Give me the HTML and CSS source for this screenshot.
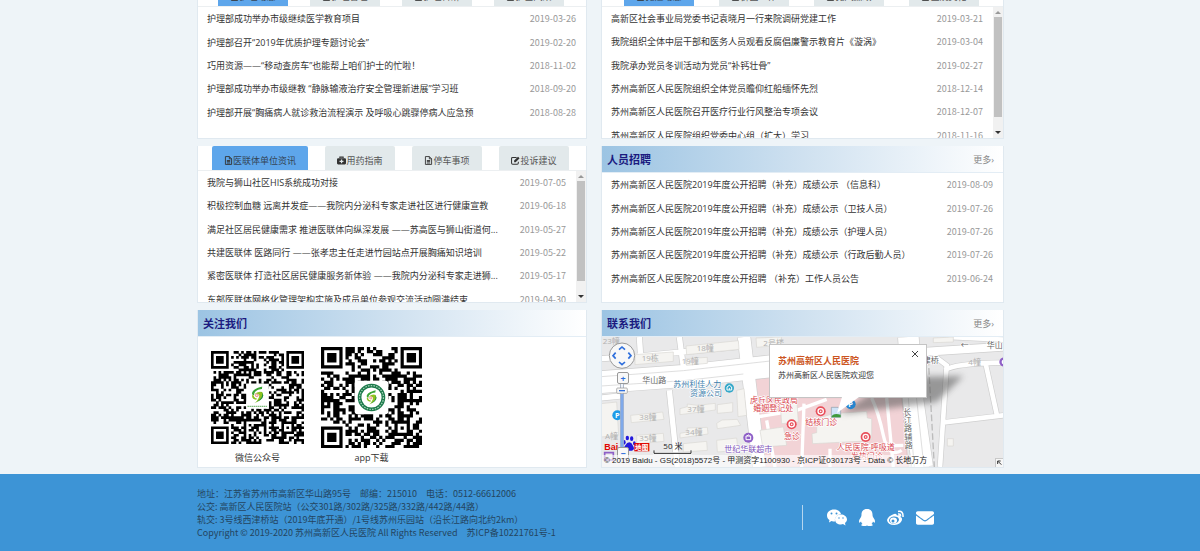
FILE: index.html
```html
<!DOCTYPE html>
<html lang="zh-CN">

<head>
    <meta charset="UTF-8" />
    <meta name="viewport" content="width=device-width, initial-scale=1.0" />
    <title>苏州高新区人民医院</title>
    <link rel="stylesheet" href="styles.css">
</head>

<body>
    <!-- shared icons -->
    <svg class="sprite" aria-hidden="true">
        <symbol id="icon-file" viewBox="0 0 14 16">
            <path d="M1.5 1h7l4 4v10h-11zM8.5 1v4h4M4 8h6M4 10h6M4 12.500h6" fill="none" stroke="currentColor" stroke-width="1.6" />
        </symbol>
        <symbol id="icon-medkit" viewBox="0 0 16 16">
            <path d="M5 4V2h6v2" fill="none" stroke="currentColor" stroke-width="1.8" />
            <path fill-rule="evenodd" d="M2 4h12q2 0 2 2v7q0 2-2 2H2q-2 0-2-2V6q0-2 2-2zM7 6v2.500H4.500v2.200H7V13h2.200v-2.300h2.300V8.500H9.200V6z" fill="currentColor" />
        </symbol>
        <symbol id="icon-edit" viewBox="0 0 16 16">
            <path d="M10 2.500H3Q1 2.500 1 4.500v8Q1 14.500 3 14.500h8q2 0 2-2V10" fill="none" stroke="currentColor" stroke-width="1.8" />
            <path d="M5.500 11V8.200L12.500 1.200l2.800 2.800L8.300 11z" fill="currentColor" />
        </symbol>
        <symbol id="hospital-mark" viewBox="0 0 40 48">
            <path d="M33 1C16 5 5 12 5 20q0 5 6 4C9 16 20 9 32 8z" fill="#3aa535" />
            <path d="M11 22q11-10 22-6 6 12-8 23l-12 7q12-12 12-22-7-5-14-2z" fill="#8fc31f" />
            <path d="M31 15q6 13-7 23-5 5-12 8Q35 38 36 25z" fill="#22913a" />
            <path d="M5 25q0 12 11 12l3-3Q10 33 9 24z" fill="#8fc31f" />
            <circle cx="18" cy="25" r="5" fill="#ef9a91" />
            <circle cx="18" cy="25" r="2" fill="#fff" />
        </symbol>
    </svg>

    <main class="page">
        <section class="card">
            <nav class="tabs tabs-nursing">
                <button class="tab active"><svg class="icon"><use href="#icon-file" /></svg>护理动态</button>
                <button class="tab"><svg class="icon"><use href="#icon-file" /></svg>护理管理</button>
                <button class="tab"><svg class="icon"><use href="#icon-file" /></svg>护理科研</button>
                <button class="tab"><svg class="icon"><use href="#icon-file" /></svg>护士风采</button>
            </nav>
            <ul class="news">
                <li><a href="#">护理部成功举办市级继续医学教育项目</a><time>2019-03-26</time></li>
                <li><a href="#">护理部召开“2019年优质护理专题讨论会”</a><time>2019-02-20</time></li>
                <li><a href="#">巧用资源——“移动查房车”也能帮上咱们护士的忙啦！</a><time>2018-11-02</time></li>
                <li><a href="#">护理部成功举办市级继教 “静脉输液治疗安全管理新进展”学习班</a><time>2018-09-20</time></li>
                <li><a href="#">护理部开展“胸痛病人就诊救治流程演示 及呼吸心跳骤停病人应急预</a><time>2018-08-28</time></li>
            </ul>
        </section>

        <section class="card">
            <nav class="tabs tabs-party">
                <button class="tab active"><svg class="icon"><use href="#icon-file" /></svg>党建动态</button>
                <button class="tab"><svg class="icon"><use href="#icon-file" /></svg>群团工作</button>
                <button class="tab"><svg class="icon"><use href="#icon-file" /></svg>党风廉政</button>
                <button class="tab"><svg class="icon"><use href="#icon-file" /></svg>医院文化</button>
            </nav>
            <div class="scroll-box">
                <ul class="news news-long">
                    <li><a href="#">高新区社会事业局党委书记袁晓月一行来院调研党建工作</a><time>2019-03-21</time></li>
                    <li><a href="#">我院组织全体中层干部和医务人员观看反腐倡廉警示教育片《漩涡》</a><time>2019-03-04</time></li>
                    <li><a href="#">我院承办党员冬训活动为党员“补钙壮骨”</a><time>2019-02-27</time></li>
                    <li><a href="#">苏州高新区人民医院组织全体党员瞻仰红船缅怀先烈</a><time>2018-12-14</time></li>
                    <li><a href="#">苏州高新区人民医院召开医疗行业行风整治专项会议</a><time>2018-12-07</time></li>
                    <li><a href="#">苏州高新区人民医院组织党委中心组（扩大）学习</a><time>2018-11-16</time></li>
                </ul>
                <div class="scrollbar"><span class="up"></span><span class="thumb"></span><span class="down"></span></div>
            </div>
        </section>

        <section class="card">
            <nav class="tabs tabs-union">
                <button class="tab active wide"><svg class="icon"><use href="#icon-file" /></svg>医联体单位资讯</button>
                <button class="tab"><svg class="icon"><use href="#icon-medkit" /></svg>用药指南</button>
                <button class="tab"><svg class="icon"><use href="#icon-file" /></svg>停车事项</button>
                <button class="tab"><svg class="icon"><use href="#icon-edit" /></svg>投诉建议</button>
            </nav>
            <div class="scroll-box">
                <ul class="news news-long">
                    <li><a href="#">我院与狮山社区HIS系统成功对接</a><time>2019-07-05</time></li>
                    <li><a href="#">积极控制血糖 远离并发症——我院内分泌科专家走进社区进行健康宣教</a><time>2019-06-18</time></li>
                    <li><a href="#">满足社区居民健康需求 推进医联体向纵深发展 ——苏高医与狮山街道何...</a><time>2019-05-27</time></li>
                    <li><a href="#">共建医联体 医路同行 ——张孝忠主任走进竹园站点开展胸痛知识培训</a><time>2019-05-22</time></li>
                    <li><a href="#">紧密医联体 打造社区居民健康服务新体验 ——我院内分泌科专家走进狮...</a><time>2019-05-17</time></li>
                    <li><a href="#">东部医联体网格化管理架构实施及成员单位参观交流活动圆满结束</a><time>2019-04-30</time></li>
                </ul>
                <div class="scrollbar"><span class="up"></span><span class="thumb"></span><span class="down"></span></div>
            </div>
        </section>

        <section class="card">
            <header class="card-head">
                <h2>人员招聘</h2>
                <a href="#">更多›</a>
            </header>
            <ul class="news">
                <li><a href="#">苏州高新区人民医院2019年度公开招聘（补充）成绩公示 （信息科）</a><time>2019-08-09</time></li>
                <li><a href="#">苏州高新区人民医院2019年度公开招聘（补充）成绩公示（卫技人员）</a><time>2019-07-26</time></li>
                <li><a href="#">苏州高新区人民医院2019年度公开招聘（补充）成绩公示（护理人员）</a><time>2019-07-26</time></li>
                <li><a href="#">苏州高新区人民医院2019年度公开招聘（补充）成绩公示（行政后勤人员）</a><time>2019-07-26</time></li>
                <li><a href="#">苏州高新区人民医院2019年度公开招聘 （补充）工作人员公告</a><time>2019-06-24</time></li>
            </ul>
        </section>

        <section class="card">
            <header class="card-head">
                <h2>关注我们</h2>
            </header>
            <div class="codes">
                <figure class="code">
                    <div class="code-box">
                        <svg class="qr qr-wechat" viewBox="0 0 37 37" data-size="37" data-seed="11">
                            <path class="modules" />
                            <rect x="14" y="13" width="9" height="10" fill="#fff" />
                            <use href="#hospital-mark" x="15" y="14" width="7" height="7" />
                            <path d="M14.500 22h8" stroke="#7dbb7a" stroke-width=".5" stroke-dasharray=".6 .2" />
                        </svg>
                    </div>
                    <figcaption>微信公众号</figcaption>
                </figure>
                <figure class="code">
                    <div class="code-box">
                        <svg class="qr qr-app" viewBox="0 0 33 33" data-size="33" data-seed="29">
                            <path class="modules" />
                            <rect x="11" y="11" width="11" height="11" rx="1" fill="#fff" />
                            <circle cx="16.500" cy="16.500" r="3.900" fill="none" stroke="#1c7a4b" stroke-width="1.200" />
                            <circle cx="16.500" cy="16.500" r="3.900" fill="none" stroke="#a9d3bc" stroke-width=".4" stroke-dasharray=".5 .4" />
                            <use href="#hospital-mark" x="14" y="14" width="5" height="5" />
                        </svg>
                    </div>
                    <figcaption>app下载</figcaption>
                </figure>
            </div>
        </section>

        <section class="card">
            <header class="card-head">
                <h2>联系我们</h2>
                <a href="#">更多›</a>
            </header>
            <div class="map">
                <svg class="map-canvas" viewBox="3 5 1209 390" preserveAspectRatio="xMidYMid slice">
                    <defs>
                        <filter id="soften" x="-20%" y="-20%" width="140%" height="140%"><feGaussianBlur stdDeviation="9" /></filter>
                        <g id="clinic">
                            <circle r="15" fill="#e8505b" />
                            <circle r="8" fill="none" stroke="#fff" stroke-width="4" />
                            <circle r="2.500" fill="#fff" />
                        </g>
                    </defs>
                    <rect x="3" y="5" width="1209" height="390" fill="#e9e9ea" />
                    <path d="M455 133L520 125V187H905L925 395H490z" fill="#f2d3d6" stroke="#d9b9bc" stroke-width="2" />

                    <!-- roads: grey casing first, white on top -->
                    <g fill="none" stroke="#cfcfcf">
                        <path stroke-width="20" d="M3 70L120 62 435 32M238 5L252 110M118 5L122 62M208 165L232 395M3 188L60 182M525 5L540 80" />
                        <path stroke-width="70" d="M3 140L250 122 520 92" />
                        <path stroke-width="42" d="M432 5L448 140 478 395" />
                        <path stroke-width="66" d="M925 5L940 200 968 395" />
                        <path stroke-width="28" d="M965 50L1212 34" />
                        <path stroke-width="18" d="M1045 5L1212 13M1000 60L1040 90 1020 395M1035 105Q1060 84 1212 82M1158 90L1192 245M1025 262L1212 240" />
                    </g>
                    <g fill="none" stroke="#fff">
                        <path stroke-width="16" d="M3 70L120 62 435 32M238 5L252 110M118 5L122 62M208 165L232 395M3 188L60 182M525 5L540 80" />
                        <path stroke-width="66" d="M3 140L250 122 520 92" />
                        <path stroke-width="38" d="M432 5L448 140 478 395" />
                        <path stroke-width="62" d="M925 5L940 200 968 395" />
                        <path stroke-width="24" d="M965 50L1212 34" />
                        <path stroke-width="14" d="M1045 5L1212 13M1000 60L1040 90 1020 395M1035 105Q1060 84 1212 82M1158 90L1192 245M1025 262L1212 240" />
                        <path stroke-width="10" d="M470 245L590 225 680 192M612 205L605 395M500 255L525 395M815 188Q835 230 850 300T905 345M860 188L880 395M690 340L690 395M720 335L910 330" />
                    </g>
                    <g fill="none" stroke="#cfcfcf" stroke-width="2">
                        <path d="M3 124L250 106 520 76M3 152L250 136 430 116M918 110L943 395M940 100L972 395" />
                        <path d="M985 70L1003 395" stroke="#bcbcbc" stroke-width="4" stroke-dasharray="20 8" />
                    </g>

                    <!-- buildings -->
                    <g fill="#f5f4f1" stroke="#dad8d3" stroke-width="2">
                        <path d="M258 32L415 16 417 42 260 58zM105 58L220 50 220 78 105 88zM258 70L322 66V84L260 90z" />
                        <path d="M92 240L188 230 192 252 94 262zM240 220L262 214 262 206 292 210 346 204 346 224 240 238zM352 208L398 202 398 230 352 234z" />
                        <path d="M240 294L262 290 262 278 322 276 324 296 240 308zM350 264L366 254 412 252 422 270 352 280zM110 300L190 294 192 318 110 326zM3 205L50 200 56 300 3 305z" />
                        <path d="M250 325L320 318 322 345 250 350zM350 315L410 308 414 345 352 350zM468 8L545 5 540 30 470 36zM410 165L432 160 440 240 414 244z" />
                        <path d="M540 195L590 190 595 260 545 265zM480 285L550 275 560 330 488 335z" />
                        <path d="M650 250L700 235 800 228 802 248 815 250 815 312 780 318 638 325 636 295 650 292z" />
                        <path d="M1042 310h18v22h-18zM1000 8L1060 5 1060 20 1000 22z" />
                    </g>

                    <path d="M880 125L1090 122 1010 200Q900 215 720 236z" fill="#555" opacity=".55" filter="url(#soften)" />

                    <g class="map-label grey">
                        <text x="8" y="26">23幢</text>
                        <text x="290" y="48">18幢</text>
                        <text x="125" y="77">19栋</text>
                        <text x="245" y="86">19幢</text>
                        <text x="490" y="32">2号楼</text>
                        <text x="262" y="231">37幢</text>
                        <text x="118" y="255">38幢</text>
                        <text x="256" y="300">34幢</text>
                        <text x="118" y="316">35幢</text>
                        <text x="15" y="312">A幢</text>
                        <text x="1105" y="88">4幢</text>
                    </g>
                    <g class="map-label dark">
                        <text x="127" y="142">华山路</text>
                        <text x="1160" y="38">华山</text>
                        <text x="968" y="84">津桥</text>
                        <text x="910" y="238">长</text>
                        <text x="911" y="263">江</text>
                        <text x="912" y="288">路</text>
                        <text x="913" y="313">辅</text>
                        <text x="914" y="338">路</text>
                        <text x="1082" y="38">←</text>
                    </g>
                    <g class="map-label blue">
                        <text x="220" y="155">苏州利佳人力</text>
                        <text x="270" y="182">资源公司</text>
                    </g>
                    <g class="map-label red">
                        <text x="450" y="202">虎丘区民政局</text>
                        <text x="460" y="228">婚姻登记处</text>
                        <text x="552" y="310">急诊</text>
                        <text x="616" y="270">结核门诊</text>
                        <text x="710" y="345">人民医院·呼吸道</text>
                        <text x="752" y="371">发热门诊</text>
                    </g>
                    <g class="map-label violet">
                        <text x="373" y="350">世纪华联超市</text>
                    </g>

                    <use href="#clinic" x="575" y="267" />
                    <use href="#clinic" x="662" y="228" />
                    <use href="#clinic" x="797" y="305" />
                    <circle cx="388" cy="158" r="14" fill="#35a8c9" />
                    <path d="M381 164v-9l7-5 7 5v9zM388 164v-6" fill="none" stroke="#fff" stroke-width="3" />
                    <circle cx="445" cy="307" r="15" fill="#8e5fc7" />
                    <path d="M438 302h14v11h-14zM441 302q4-7 8 0" fill="none" stroke="#fff" stroke-width="3" />
                    <circle cx="1212" cy="80" r="14" fill="#8e5fc7" />
                    <circle cx="1212" cy="80" r="7" fill="#fff" />
                    <circle cx="52" cy="240" r="15" fill="#1e9be8" />
                    <text class="parking" x="45" y="248">P</text>
                    <circle cx="752" cy="207" r="15" fill="#2585cf" />
                    <text class="parking" x="745" y="215">P</text>
                    <path d="M14 352h26v22H14z" fill="none" stroke="#8e5fc7" stroke-width="5" />

                    <!-- missing marker picture -->
                    <path d="M694 216h20l8 8v22h-28z" fill="#cfe3f7" stroke="#8c9aa6" stroke-width="2" />
                    <path d="M694 246q4-14 28-8v8z" fill="#3e9a3c" />

                    <!-- Baidu logo -->
                    <text class="logo-red" x="13" y="345">Bai</text>
                    <g fill="#2319dc">
                        <ellipse cx="72" cy="321" rx="5" ry="7" />
                        <ellipse cx="82" cy="308" rx="5" ry="7" />
                        <ellipse cx="95" cy="310" rx="5" ry="7" />
                        <ellipse cx="103" cy="324" rx="4" ry="6" />
                        <path d="M88 321q7 0 10 9 9 13-2 16H78q-12-3-3-15 6-10 13-10z" />
                    </g>
                    <rect x="103" y="323" width="45" height="25" fill="#e10601" />
                    <text class="logo-white" x="105" y="344">地图</text>

                    <!-- scale -->
                    <path d="M162 345v9h111v-9" fill="none" stroke="#fff" stroke-width="7" />
                    <path d="M162 345v9h111v-9" fill="none" stroke="#222" stroke-width="3" />
                    <text class="scale" x="190" y="341">50 米</text>

                    <!-- pan wheel and zoom track -->
                    <circle cx="66" cy="61" r="38" fill="#f8f8f8" stroke="#9a9a9a" stroke-width="3" />
                    <path d="M57 43l9-8 9 8M57 80l9 8 9-8M47 52l-8 9 8 9M85 52l8 9-8 9" fill="none" stroke="#2f6fdc" stroke-width="5" />
                    <rect x="61" y="144" width="10" height="198" fill="#eef3fa" stroke="#8f9db4" stroke-width="2" />
                    <rect x="62" y="175" width="8" height="166" fill="#7fa9ea" />
                    <rect x="50" y="158" width="32" height="16" rx="3" fill="#f8f8f8" stroke="#8f8f8f" stroke-width="2" />
                    <path d="M57 166h18" stroke="#2f6fdc" stroke-width="4" />
                    <rect x="1187" y="369" width="28" height="28" fill="#f6f6f6" stroke="#b5b5b5" stroke-width="2" />
                    <path d="M1204 388l-10-10M1193 386v-9h9" fill="none" stroke="#333" stroke-width="3" />
                </svg>
                <button class="zoom zoom-in" aria-label="放大">+</button>
                <button class="zoom zoom-out" aria-label="缩小">−</button>
                <p class="copyright">© 2019 Baidu - GS(2018)5572号 - 甲测资字1100930 - 京ICP证030173号 - Data © 长地万方</p>
                <div class="popup">
                    <button class="close" aria-label="关闭">
                        <svg viewBox="0 0 8 8"><path d="M1 1l6 6M7 1L1 7" stroke="#444" fill="none" /></svg>
                    </button>
                    <h3>苏州高新区人民医院</h3>
                    <p>苏州高新区人民医院欢迎您</p>
                    <svg class="tail" viewBox="0 0 22 16"><path d="M5 0L0 16 22 0z" fill="#fff" /></svg>
                </div>
            </div>
        </section>
    </main>

    <footer class="footer">
        <div class="footer-inner">
            <address>
                <p><span>地址：江苏省苏州市高新区华山路95号</span><span>邮编：215010</span><span>电话：0512-66612006</span></p>
                <p>公交: 高新区人民医院站（公交301路/302路/325路/332路/442路/44路）</p>
                <p>轨交: 3号线西津桥站（2019年底开通）/1号线苏州乐园站（沿长江路向北约2km）</p>
                <p><span>Copyright © 2019-2020 苏州高新区人民医院 All Rights Reserved</span><span>苏ICP备10221761号-1</span></p>
            </address>
            <div class="social">
                <a href="#" aria-label="微信">
                    <svg width="20" height="17" viewBox="0 0 40 34">
                        <path d="M14 1C6 1 0 6 0 13c0 4 2 7 5 9l-1 5 5-3q3 1 7 1-2-12 12-15C27 5 21 1 14 1z" fill="#fff" />
                        <path d="M28 11c-7 0-12 4-12 10s5 10 12 10l4-1 5 3-1-5c2-2 4-4 4-7 0-6-6-10-12-10z" fill="#fff" />
                        <g fill="#3d94d6"><circle cx="9" cy="9" r="2" /><circle cx="19" cy="9" r="2" /><circle cx="24" cy="18" r="1.500" /><circle cx="32" cy="18" r="1.500" /></g>
                    </svg>
                </a>
                <a href="#" aria-label="QQ">
                    <svg width="16" height="17" viewBox="0 0 32 34">
                        <path d="M16 0C8 0 5 5 5 11q0 3-1 5-4 5-4 10 1 3 4-1 1 3 3 5-4 1-2 3 6 2 11 0 5 2 11 0 2-2-2-3 2-2 3-5 3 4 4 1 0-5-4-10-1-2-1-5C27 5 24 0 16 0z" fill="#fff" />
                    </svg>
                </a>
                <a href="#" aria-label="微博">
                    <svg width="17" height="16" viewBox="0 0 34 32">
                        <path d="M14 8q5-2 6 3 8-3 7 3 4 1 3 6-3 9-15 10Q1 30 0 20 2 12 14 8z" fill="#fff" />
                        <ellipse cx="14" cy="20" rx="10" ry="7" fill="#3d94d6" transform="rotate(-8 14 20)" />
                        <ellipse cx="13" cy="21" rx="7" ry="6" fill="#fff" />
                        <circle cx="12" cy="22" r="3" fill="#3d94d6" />
                        <path d="M22 3q11-2 10 11M22 8q6-1 5 5" fill="none" stroke="#fff" stroke-width="3" />
                    </svg>
                </a>
                <a href="#" aria-label="邮箱">
                    <svg width="18" height="18" viewBox="0 0 512 512">
                        <path fill="#fff" d="M502.3 190.8c3.9-3.1 9.7-.2 9.7 4.700V400c0 26.500-21.500 48-48 48H48c-26.500 0-48-21.500-48-48V195.600c0-5 5.700-7.800 9.700-4.700 22.400 17.400 52.100 39.500 154.100 113.600 21.100 15.400 56.700 47.800 92.200 47.600 35.700.3 72-32.800 92.300-47.600 102-74.100 131.600-96.300 154-113.700zM256 320c23.200.4 56.600-29.200 73.400-41.400 132.700-96.300 142.800-104.700 173.400-128.700 5.800-4.500 9.200-11.500 9.200-18.900v-19c0-26.500-21.500-48-48-48H48c-26.500 0-48 21.500-48 48v19c0 7.400 3.400 14.300 9.200 18.900 30.600 23.900 40.700 32.400 173.400 128.700 16.800 12.200 50.200 41.800 73.400 41.400z" />
                    </svg>
                </a>
            </div>
        </div>
    </footer>

    <script src="qr.js"></script>
</body>

</html>
```

FILE: styles.css
```css
* {
    box-sizing: border-box;
}

body {
    margin: 0;
    background: #eef4f8;
    font-family: "Open Sans", "Noto Sans CJK SC", sans-serif;
    font-size: 9px;
    color: #333;
}

h2, h3, p, ul, figure {
    margin: 0;
    padding: 0;
}

a {
    color: inherit;
    text-decoration: none;
}

button {
    font-family: inherit;
    font-size: 9px;
    color: inherit;
    border: none;
    padding: 0;
    cursor: pointer;
}

.sprite {
    position: absolute;
    width: 0;
    height: 0;
}

/* the page opens a little below the top of the first row */
.page {
    display: grid;
    grid-template-columns: 390fr 403fr;
    gap: 7px 14px;
    max-width: 808px;
    margin: -18px auto 6px;
    padding-left: 1px;
}

.card {
    min-width: 0;
    min-height: 157px;
    background: #fff;
    border: 1px solid #e0e9f0;
    border-top: none;
}

/* tabs */
.tabs {
    display: flex;
    height: 25px;
    border-bottom: 1px solid #eceff1;
}

.tabs-nursing {
    padding-left: 20px;
    gap: 22px;
}

.tabs-party {
    padding-left: 22px;
    gap: 25px;
}

.tabs-union {
    padding-left: 14px;
    gap: 17px;
}

.tab {
    display: flex;
    align-items: center;
    justify-content: center;
    width: 70px;
    padding-top: 4px;
    border-radius: 2px 2px 0 0;
    background: #e2e9eb;
    color: #555;
}

.tab.wide {
    width: 96px;
}

.tab.active {
    background: #5ea6eb;
    color: #345;
}

.icon {
    width: 9px;
    height: 9px;
    color: #333;
}

/* news lists */
.news {
    flex: 1;
    display: grid;
    grid-auto-rows: 1fr;
    height: 117px;
    min-width: 0;
    padding: 0 10px 0 9px;
    list-style: none;
}

.news-long {
    height: 140px;
}

.news li {
    display: flex;
    align-items: center;
    justify-content: space-between;
    white-space: nowrap;
}

.news time {
    font-family: "Noto Sans CJK SC", sans-serif;
    color: #999;
}

.scroll-box {
    display: flex;
    height: 131px;
    overflow: hidden;
}

.scrollbar {
    display: flex;
    flex-direction: column;
    align-items: center;
    width: 10px;
    padding: 4px 0;
    background: #f1f1f1;
}

.scrollbar .thumb {
    width: 8px;
    height: 100px;
    margin: 3px 0 auto;
    background: #c1c1c1;
}

.scrollbar .up,
.scrollbar .down {
    border: 3px solid transparent;
}

.scrollbar .up {
    border-top: none;
    border-bottom-color: #999;
}

.scrollbar .down {
    border-bottom: none;
    border-top-color: #333;
}

/* titled cards */
.card-head {
    display: flex;
    align-items: center;
    justify-content: space-between;
    height: 27px;
    padding: 0 9px 0 5px;
    border-bottom: 1px solid #e3edf5;
    background: linear-gradient(90deg, #9cc4e3, #cfe1f0 50%, #fff);
}

.card-head h2 {
    font-size: 11px;
    color: #1b1b80;
}

.card-head a {
    color: #888;
}

/* QR codes */
.codes {
    display: flex;
    gap: 17px;
    padding: 10px 13px 0;
}

.code {
    text-align: center;
}

.code-box {
    display: flex;
    align-items: center;
    height: 101px;
}

.code figcaption {
    margin-top: 3px;
    line-height: 13px;
}

.qr-wechat {
    width: 93px;
    height: 93px;
}

.qr-app {
    width: 101px;
    height: 101px;
}

/* map */
.map {
    position: relative;
    height: 130px;
    overflow: hidden;
}

.map-canvas {
    display: block;
    width: 100%;
    height: 100%;
}

.map-label {
    font-size: 24px;
    paint-order: stroke;
    stroke: #fff;
    stroke-width: 4px;
}

.map-label.grey {
    fill: #b0b0b0;
    stroke: none;
}

.map-label.dark {
    fill: #666;
}

.map-label.blue {
    fill: #3a7cab;
}

.map-label.red {
    fill: #d8434c;
}

.map-label.violet {
    fill: #7d50b8;
}

.parking {
    font-size: 22px;
    font-weight: bold;
    fill: #fff;
}

.logo-red {
    font: bold 27px "Liberation Sans", sans-serif;
    fill: #e10601;
}

.logo-white {
    font-size: 20px;
    font-weight: bold;
    fill: #fff;
}

.scale {
    font-size: 24px;
    fill: #222;
}

.zoom {
    position: absolute;
    left: 15px;
    width: 12px;
    height: 12px;
    border: 1px solid #999;
    border-radius: 2px;
    background: #f8f8f8;
    color: #2f6fdc;
    font-weight: bold;
    line-height: 9px;
}

.zoom-in {
    top: 35px;
}

.zoom-out {
    top: 110px;
}

.copyright {
    position: absolute;
    left: 0;
    bottom: 0;
    padding: 0 2px;
    background: rgba(255, 255, 255, 0.6);
    font-family: "Liberation Sans", "Noto Sans CJK SC", sans-serif;
    font-size: 8px;
    line-height: 12px;
    color: #222;
    white-space: nowrap;
}

.popup {
    position: absolute;
    left: 167px;
    top: 7px;
    width: 158px;
    height: 54px;
    padding: 9px 8px;
    border: 1px solid #c4c4c4;
    background: #fff;
    font-size: 8px;
    line-height: 14px;
}

.popup h3 {
    font-size: 9px;
    color: #cc5522;
}

.popup .close {
    position: absolute;
    top: 5px;
    right: 7px;
    width: 8px;
    height: 8px;
    background: none;
}

.popup .close svg {
    display: block;
}

.popup .tail {
    position: absolute;
    left: 67px;
    top: 52px;
    width: 22px;
    height: 16px;
}

/* footer */
.footer {
    background: #3d94d6;
}

.footer-inner {
    display: flex;
    align-items: center;
    justify-content: space-between;
    max-width: 806px;
    margin: 0 auto;
    padding: 13px 69px 12px 0;
}

.footer address {
    font-family: "Noto Sans CJK SC", sans-serif;
    font-style: normal;
    line-height: 13px;
    color: #244560;
}

.footer address p {
    display: flex;
    gap: 9px;
}

.social {
    display: flex;
    align-items: center;
    gap: 12px;
    height: 25px;
    margin-top: 9px;
    padding-left: 24px;
    border-left: 1px solid #b5d6ef;
}

.social a,
.social svg {
    display: block;
}
```

FILE: qr.js
```js
// finder square: dark ring, light ring, dark core
function ringAt(x, y, cx, cy, radius) {
    const d = Math.max(Math.abs(x - cx), Math.abs(y - cy));
    if (d > radius + 1) return null;
    if (radius === 3) return d === 3 || d < 2;
    return d === 2 || d === 0;
}

function drawCode(svg) {
    const size = Number(svg.dataset.size);
    let seed = Number(svg.dataset.seed);
    let d = '';

    for (let y = 0; y < size; y++) {
        for (let x = 0; x < size; x++) {
            seed = (seed * 1103515245 + 12345) % 2147483648;
            let dark = seed / 2147483648 > 0.5;

            const corners = [[3, 3], [size - 4, 3], [3, size - 4]];
            corners.forEach(([cx, cy]) => {
                const ring = ringAt(x, y, cx, cy, 3);
                if (ring !== null) dark = ring;
            });
            if (Math.max(Math.abs(x - size + 7), Math.abs(y - size + 7)) <= 2) {
                dark = ringAt(x, y, size - 7, size - 7, 2);
            }
            if (dark) d += `M${x} ${y}h1.05v1.05h-1.05z`;
        }
    }
    svg.querySelector('.modules').setAttribute('d', d);
}

document.querySelectorAll('.qr').forEach(drawCode);
```
